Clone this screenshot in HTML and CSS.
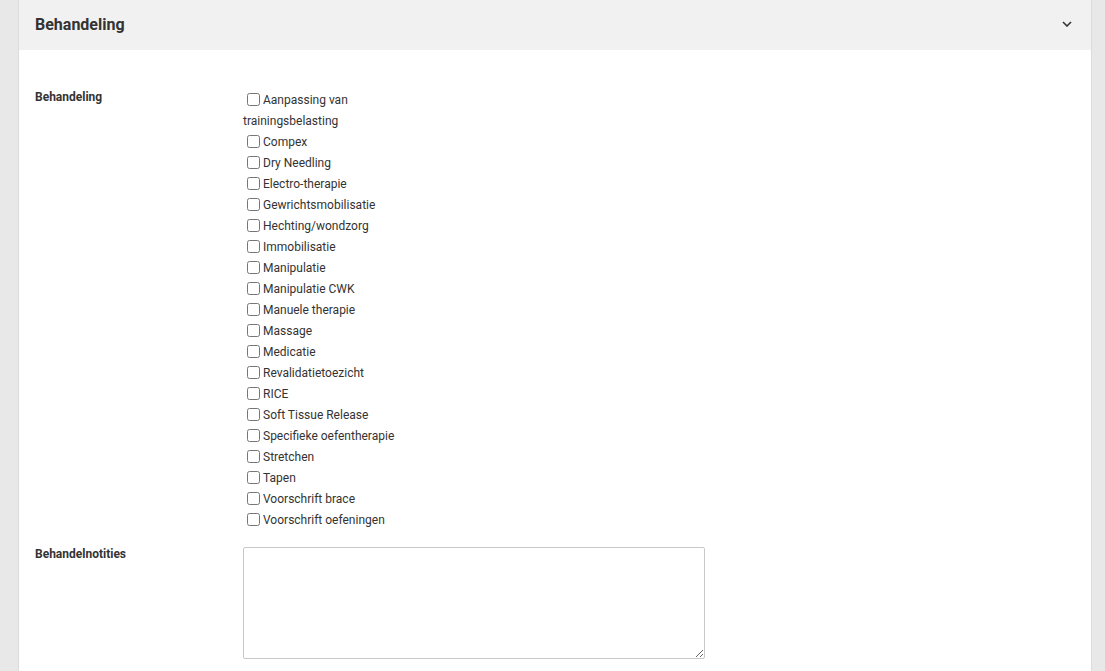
FILE: index.html
```html
<!DOCTYPE html>
<html lang="nl">
<head>
<meta charset="utf-8">
<title>Behandeling</title>
<link rel="stylesheet" href="styles.css">
</head>
<body>
<div class="page">
  <section class="card">
    <header class="card-header">
      <h2 class="card-title">Behandeling</h2>
      <svg class="chevron" width="10" height="6" viewBox="0 0 10 6"><path d="M1 1 L5 5 L9 1" fill="none" stroke="#333" stroke-width="1.6"/></svg>
    </header>
    <div class="card-body">
      <div class="form-row">
        <div class="form-label">Behandeling</div>
        <div class="form-value checks">
          <div class="check"><input type="checkbox">Aanpassing van trainingsbelasting</div>
          <div class="check"><input type="checkbox">Compex</div>
          <div class="check"><input type="checkbox">Dry Needling</div>
          <div class="check"><input type="checkbox">Electro-therapie</div>
          <div class="check"><input type="checkbox">Gewrichtsmobilisatie</div>
          <div class="check"><input type="checkbox">Hechting/wondzorg</div>
          <div class="check"><input type="checkbox">Immobilisatie</div>
          <div class="check"><input type="checkbox">Manipulatie</div>
          <div class="check"><input type="checkbox">Manipulatie CWK</div>
          <div class="check"><input type="checkbox">Manuele therapie</div>
          <div class="check"><input type="checkbox">Massage</div>
          <div class="check"><input type="checkbox">Medicatie</div>
          <div class="check"><input type="checkbox">Revalidatietoezicht</div>
          <div class="check"><input type="checkbox">RICE</div>
          <div class="check"><input type="checkbox">Soft Tissue Release</div>
          <div class="check"><input type="checkbox">Specifieke oefentherapie</div>
          <div class="check"><input type="checkbox">Stretchen</div>
          <div class="check"><input type="checkbox">Tapen</div>
          <div class="check"><input type="checkbox">Voorschrift brace</div>
          <div class="check"><input type="checkbox">Voorschrift oefeningen</div>
        </div>
      </div>
      <div class="form-row notes-row">
        <div class="form-label">Behandelnotities</div>
        <div class="form-value">
          <textarea class="notes"></textarea>
        </div>
      </div>
    </div>
  </section>
</div>
</body>
</html>
```
FILE: styles.css
```css
* { box-sizing: border-box; }
html, body {
  margin: 0;
  padding: 0;
  background: #e8e8e8;
  font-family: Roboto, "Liberation Sans", Arial, sans-serif;
  color: #333;
  overflow: hidden;
}
.page {
  padding: 0 13px 0 18px;
  height: 671px;
}
.card {
  background: #fff;
  border-left: 1px solid #dcdcdc;
  border-right: 1px solid #dcdcdc;
  height: 100%;
}
.card-header {
  height: 50px;
  background: #f1f1f1;
  display: flex;
  align-items: center;
  justify-content: space-between;
  padding: 0 19px 0 16px;
}
.card-title {
  margin: 0;
  font-size: 16px;
  font-weight: 700;
  color: #333;
  position: relative;
  top: -1px;
}
.chevron { display: block; position: relative; top: -1px; }
.card-body {
  padding: 39px 16px 0 16px;
}
.form-row {
  display: flex;
}
.form-label {
  width: 208px;
  flex: none;
  font-size: 12px;
  font-weight: 700;
  line-height: 16px;
}
.checks {
  width: 180px;
  font-size: 12px;
  line-height: 21px;
  padding-top: 1px;
}
.check input {
  margin: 0 3px 0 4px;
  width: 13px;
  height: 13px;
  vertical-align: -2px;
}
.notes-row {
  margin-top: 16px;
}
.notes-row .form-label { line-height: 14px; }
.notes {
  display: block;
  width: 462px;
  height: 112px;
  border: 1px solid #c8c8c8;
  border-radius: 2px;
  resize: both;
  margin: 0;
}
```
